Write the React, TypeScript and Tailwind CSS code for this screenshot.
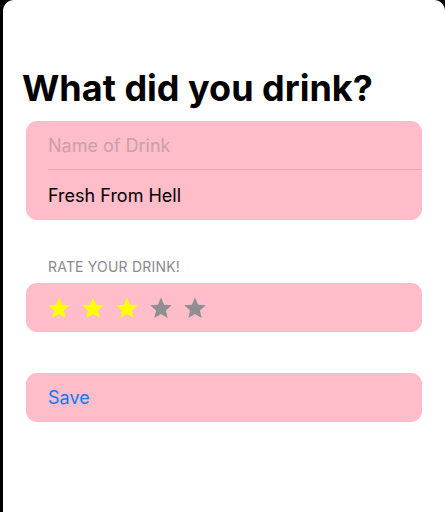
import { useState } from 'react';

function Star({ filled }: { filled: boolean }) {
  return (
    <svg width="24" height="24" viewBox="0 0 24 24" className={filled ? 'text-[#ffff00]' : 'text-[#8e8e93]'}>
      <path
        fill="currentColor"
        d="M12 1.6l3.1 7.1 7.7.6-5.9 5.1 1.8 7.6L12 18l-6.7 4 1.8-7.6-5.9-5.1 7.7-.6z"
      />
    </svg>
  );
}

export default function App() {
  const [name, setName] = useState('Fresh From Hell');
  const [rating, setRating] = useState(3);

  return (
    <div className="h-[512px] bg-black pl-[3px] font-['Inter','Liberation_Sans',sans-serif]">
      <div className="h-full rounded-t-[11px] bg-white pl-[23px] pr-[23px] pt-[66px]">
        {/* Title */}
        <h1 className="-ml-[4px] text-[36px] leading-[44px] font-bold text-black">
          What did you drink?
        </h1>

        {/* Name fields */}
        <div className="mt-[11px] rounded-[11px] bg-[#ffbcc9] pl-[22px]">
          <div className="flex h-[49px] items-center border-b border-[#e3a9b4] text-[18px] text-[#c7a0a8]">
            Name of Drink
          </div>
          <input
            value={name}
            onChange={(e) => setName(e.target.value)}
            className="h-[50px] w-full bg-transparent text-[18px] text-black outline-none"
          />
        </div>

        {/* Rating */}
        <div className="mt-[39px] pl-[22px] text-[14px] leading-[16px] tracking-[0.2px] text-[#8a8a8e]">
          RATE YOUR DRINK!
        </div>
        <div className="mt-[8px] flex h-[49px] items-center gap-[10px] rounded-[11px] bg-[#ffbcc9] pl-[21px]">
          {[1, 2, 3, 4, 5].map((i) => (
            <button key={i} onClick={() => setRating(i)}>
              <Star filled={i <= rating} />
            </button>
          ))}
        </div>

        {/* Save */}
        <button className="mt-[41px] flex h-[49px] w-full items-center rounded-[11px] bg-[#ffbcc9] pl-[22px] text-[18px] text-[#0a7aff]">
          Save
        </button>
      </div>
    </div>
  );
}
